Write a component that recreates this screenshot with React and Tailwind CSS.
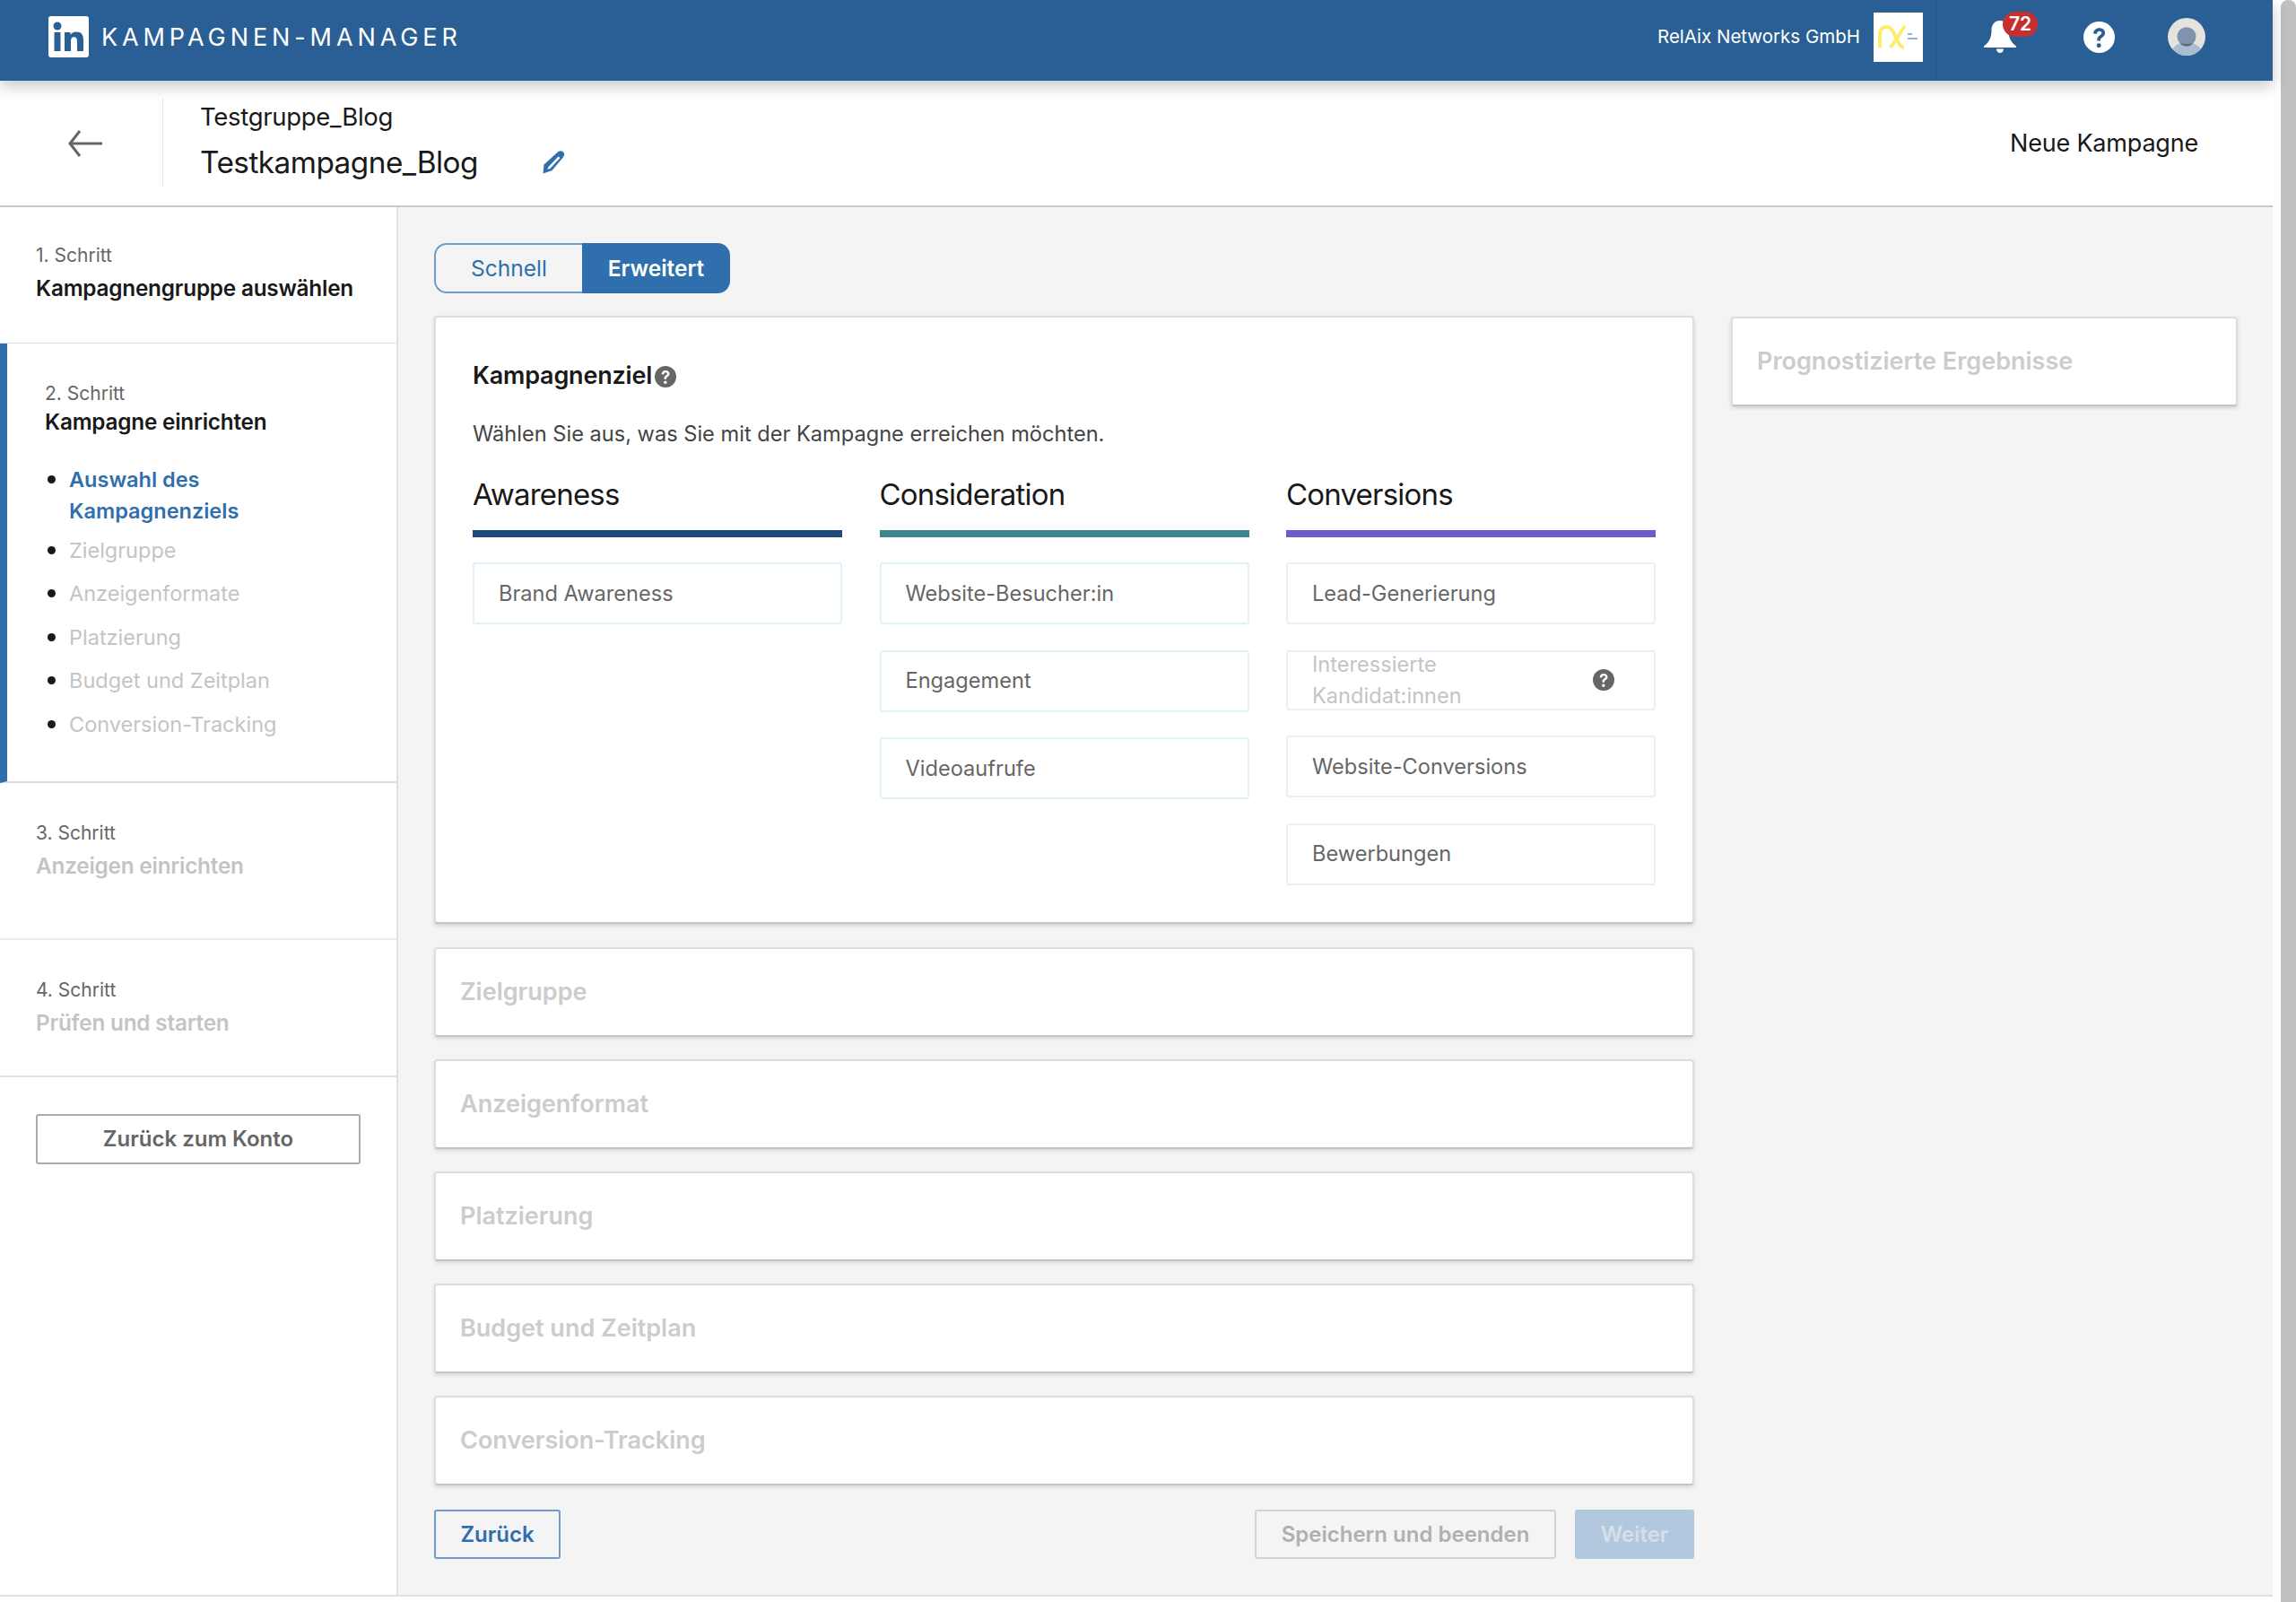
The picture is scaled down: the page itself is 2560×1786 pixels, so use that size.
const font = { fontFamily: "Inter, 'Noto Sans', sans-serif" };

function HelpIcon({ size = 24, fill = "#666666", mark = "#ffffff" }) {
  return (
    <svg width={size} height={size} viewBox="0 0 24 24" className="shrink-0">
      <circle cx="12" cy="12" r="12" fill={fill} />
      <path
        d="M7.600 9.200c.2-2.600 2-4.200 4.500-4.200 2.600 0 4.400 1.500 4.400 3.700 0 1.700-.9 2.600-2.100 3.400-1 .7-1.400 1.100-1.400 2.100v.5h-2.500v-.8c0-1.600.7-2.500 1.900-3.300 1-.7 1.500-1.100 1.500-1.800 0-.9-.7-1.500-1.700-1.500-1.100 0-1.900.8-2 2.100z"
        fill={mark}
      />
      <circle cx="11.800" cy="18.300" r="1.700" fill={mark} />
    </svg>
  );
}

function StepHead({ n, title, muted }) {
  return (
    <>
      <p className="text-[21px] leading-[28px] text-[#666666]">{n}. Schritt</p>
      <p
        className={`mt-[6px] text-[24.300px] leading-[32px] font-semibold tracking-[-0.2px] ${
          muted ? "text-[#c4c4c4]" : "text-[#191919]"
        }`}
      >
        {title}
      </p>
    </>
  );
}

function SubItem({ children, active }) {
  return (
    <li className={`flex ${active ? "-mb-[5px]" : ""}`}>
      <span className="mt-[13px] ml-[3px] mr-[15px] w-[9px] h-[9px] rounded-full bg-[#191919] shrink-0" />
      <span
        className={`text-[23.500px] leading-[35px] ${
          active ? "font-semibold text-[#2f6fad]" : "text-[#c4c4c4]"
        }`}
      >
        {children}
      </span>
    </li>
  );
}

function Sidebar() {
  return (
    <aside className="w-[444px] shrink-0 bg-white border-r-2 border-[#e0e0e0] flex flex-col">
      <div className="h-[152px] pl-[40px] pt-[40px] border-b border-[#e0e0e0]">
        <StepHead n={1} title="Kampagnengruppe auswählen" />
      </div>
      <div className="h-[490px] border-l-[8px] border-[#2f6fad] pl-[42px] pt-[42px] border-b-2 border-b-[#dedede]">
        <p className="text-[21px] leading-[28px] text-[#666666]">2. Schritt</p>
        <p className="mt-[1px] text-[24.300px] leading-[32px] font-semibold tracking-[-0.2px] text-[#191919]">
          Kampagne einrichten
        </p>
        <ul className="mt-[31px] flex flex-col gap-[13.500px] w-[300px]">
          <SubItem active>Auswahl des Kampagnenziels</SubItem>
          <SubItem>Zielgruppe</SubItem>
          <SubItem>Anzeigenformate</SubItem>
          <SubItem>Platzierung</SubItem>
          <SubItem>Budget und Zeitplan</SubItem>
          <SubItem>Conversion-Tracking</SubItem>
        </ul>
      </div>
      <div className="h-[175px] pl-[40px] pt-[42px] border-b-2 border-[#ebebeb]">
        <StepHead n={3} title="Anzeigen einrichten" muted />
      </div>
      <div className="h-[153px] pl-[40px] pt-[42px] border-b-2 border-[#e0e0e0]">
        <StepHead n={4} title="Prüfen und starten" muted />
      </div>
      <div className="px-[40px] pt-[41px]">
        <button className="w-[362px] h-[56px] border-2 border-[#aaaaaa] rounded-[3px] text-[24px] font-semibold text-[#666666] bg-white">
          Zurück zum Konto
        </button>
      </div>
    </aside>
  );
}

function Goal({ label, border, disabled }) {
  if (disabled) {
    return (
      <div
        className={`h-[67px] border-2 ${border} rounded-[3px] pl-[27px] pr-[44px] flex items-center justify-between text-[23.600px] leading-[35px] text-[#c4c4c4]`}
      >
        <span className="w-[240px]">{label}</span>
        <HelpIcon />
      </div>
    );
  }
  return (
    <div
      className={`h-[69px] border-2 ${border} rounded-[3px] pl-[27px] flex items-center text-[23.600px] text-[#666666]`}
    >
      {label}
    </div>
  );
}

function GoalColumn({ title, bar, children, gap }) {
  return (
    <div className="flex-1">
      <h3 className="text-[33px] leading-[44px] tracking-[-0.8px] text-[#191919]">{title}</h3>
      <div className={`mt-[18px] h-[8px] ${bar}`} />
      <div className={`mt-[28px] flex flex-col ${gap}`}>{children}</div>
    </div>
  );
}

function Collapsed({ title }) {
  return (
    <div className="h-[100px] bg-white border-2 border-[#dddddd] border-b-[#c4c4c4] rounded-[4px] shadow-[0_2px_4px_rgba(0,0,0,0.12)] pl-[27px] flex items-center text-[27px] font-semibold text-[#cccccc]">
      {title}
    </div>
  );
}

function ObjectiveCard() {
  return (
    <section className="h-[678px] bg-white border-2 border-[#dddddd] border-b-[#c4c4c4] rounded-[4px] shadow-[0_2px_4px_rgba(0,0,0,0.14)] pl-[41px] pr-[41px] pt-[47px]">
      <h2 className="flex items-center text-[27px] leading-[36px] font-semibold tracking-[-0.2px] text-[#191919]">
        Kampagnenziel
        <span className="ml-[3px] mt-[2px]">
          <HelpIcon />
        </span>
      </h2>
      <p className="mt-[31px] text-[23.600px] leading-[32px] text-[#444444]">
        Wählen Sie aus, was Sie mit der Kampagne erreichen möchten.
      </p>
      <div className="mt-[29px] flex gap-[41.500px]">
        <GoalColumn title="Awareness" bar="bg-[#1f4a7c]" gap="gap-[28px]">
          <Goal label="Brand Awareness" border="border-[#e2f2fb]" />
        </GoalColumn>
        <GoalColumn title="Consideration" bar="bg-[#3d8590]" gap="gap-[28.500px]">
          <Goal label="Website-Besucher:in" border="border-[#dff4f4]" />
          <Goal label="Engagement" border="border-[#dff4f4]" />
          <Goal label="Videoaufrufe" border="border-[#dff4f4]" />
        </GoalColumn>
        <GoalColumn title="Conversions" bar="bg-[#6a5cc9]" gap="gap-[28.500px]">
          <Goal label="Lead-Generierung" border="border-[#eeedfd]" />
          <Goal label="Interessierte Kandidat:innen" border="border-[#eeedfd]" disabled />
          <Goal label="Website-Conversions" border="border-[#eeedfd]" />
          <Goal label="Bewerbungen" border="border-[#eeedfd]" />
        </GoalColumn>
      </div>
    </section>
  );
}

function Main() {
  return (
    <main className="flex-1 bg-[#f4f4f4] pl-[40px] pt-[40px] pr-[39px] flex gap-[41px]">
      <div className="w-[1405px] shrink-0">
        <div className="flex h-[56px] w-[330px] text-[24.500px]">
          <button className="w-[165px] pt-[1px] border-2 border-r-0 border-[#6f9ccb] rounded-l-[14px] text-[#2f6fad]">
            Schnell
          </button>
          <button className="flex-1 pt-[1px] bg-[#2f6fad] rounded-r-[14px] font-semibold text-white">
            Erweitert
          </button>
        </div>
        <div className="mt-[25px] flex flex-col gap-[25px]">
          <div className="mb-[1px]">
            <ObjectiveCard />
          </div>
          <Collapsed title="Zielgruppe" />
          <Collapsed title="Anzeigenformat" />
          <Collapsed title="Platzierung" />
          <Collapsed title="Budget und Zeitplan" />
          <Collapsed title="Conversion-Tracking" />
        </div>
        <div className="mt-[27px] flex text-[24px] font-semibold">
          <button className="w-[141px] h-[55px] border-2 border-[#6f9ccb] rounded-[3px] text-[#2f6fad]">
            Zurück
          </button>
          <button className="ml-auto w-[336px] h-[55px] border-2 border-[#d2d2d2] rounded-[3px] text-[#b0b0b0]">
            Speichern und beenden
          </button>
          <button className="ml-[21px] w-[133px] h-[55px] bg-[#b2c8de] rounded-[3px] text-[#d5e0ec]">
            Weiter
          </button>
        </div>
      </div>
      <div className="flex-1">
        <div className="mt-[82px] h-[100px] bg-white border-2 border-[#dddddd] border-b-[#c4c4c4] rounded-[4px] shadow-[0_2px_4px_rgba(0,0,0,0.14)] pl-[27px] flex items-center text-[27px] font-semibold text-[#cccccc]">
          Prognostizierte Ergebnisse
        </div>
      </div>
    </main>
  );
}

function TopBar() {
  return (
    <header className="relative z-10 h-[90px] shrink-0 bg-[#2a5f96] shadow-[0_6px_16px_rgba(0,0,0,0.22)] flex items-center pl-[54px] pb-[8px] text-white">
      <svg width="45" height="46" viewBox="0 0 45 46" className="shrink-0">
        <rect width="45" height="46" rx="3" fill="#ffffff" />
        <circle cx="10" cy="11" r="4.500" fill="#2a5f96" />
        <rect x="6.500" y="18" width="7" height="21" fill="#2a5f96" />
        <path
          d="M18 18h6.500v3c1.200-2.100 3.500-3.500 6.500-3.500 5.500 0 8 3.200 8 9V39h-7V28c0-2.800-1-4.700-3.500-4.700s-3.500 2-3.500 4.700v11h-7z"
          fill="#2a5f96"
        />
      </svg>
      <span className="ml-[14px] text-[27px] tracking-[4.900px] leading-none">KAMPAGNEN-MANAGER</span>
      <span className="ml-auto text-[20.500px]">RelAix Networks GmbH</span>
      <div className="ml-[15px] w-[55px] h-[55px] bg-white flex items-center justify-center">
        <svg width="46" height="30" viewBox="0 0 46 30">
          <path d="M2 27V12C2 6 6 4 10 4c4 0 6 3 8 8l4 8c2 4 4 7 7 7" fill="none" stroke="#fdee6a" strokeWidth="4" />
          <path d="M30 3 14 27" fill="none" stroke="#fdee6a" strokeWidth="4" />
          <path d="M33 12h5M33 17h11" stroke="#8fb2d8" strokeWidth="2" />
        </svg>
      </div>
      <div className="ml-[15px] self-stretch -mb-[8px] w-px bg-[#255788]" />
      <div className="relative ml-[52px] w-[36px] h-[36px]">
        <svg width="36" height="36" viewBox="0 0 36 36">
          <path
            d="M18 0c-6 0-9.500 4.500-9.500 11 0 8-2.500 13-8.500 17.500V30h36v-1.500C30 24 27.500 19 27.500 11 27.500 4.500 24 0 18 0z"
            fill="#ffffff"
          />
          <path d="M14 31.500h8c0 2.500-1.700 4.500-4 4.500s-4-2-4-4.500z" fill="#ffffff" />
        </svg>
        <span className="absolute left-[21px] top-[-10px] w-[39px] h-[28px] rounded-full bg-[#c62f2f] text-[21px] leading-[28px] font-semibold text-center">
          72
        </span>
      </div>
      <div className="ml-[75px]">
        <HelpIcon size={35} fill="#ffffff" mark="#2a5f96" />
      </div>
      <svg width="42" height="42" viewBox="0 0 42 42" className="ml-[59px] mr-[75px]">
        <defs>
          <clipPath id="avatar-clip">
            <circle cx="21" cy="21" r="21" />
          </clipPath>
        </defs>
        <g clipPath="url(#avatar-clip)">
          <rect width="42" height="42" fill="#e6e3dc" />
          <ellipse cx="21" cy="44" rx="19" ry="17" fill="#a8bcd2" />
          <circle cx="21" cy="20.700" r="10.500" fill="#7f93ad" />
          <path d="M13.500 27.500c3 2 12 2 15 0-2 3.500-4.500 4-7.500 4s-5.500-.5-7.500-4z" fill="#5f6b7b" />
        </g>
      </svg>
    </header>
  );
}

function SubHeader() {
  return (
    <div className="h-[141px] shrink-0 bg-white border-b-2 border-[#c8c8c8] flex items-center">
      <div className="w-[181px] flex justify-center pl-[17px] pr-[9px]">
        <svg width="38" height="30" viewBox="0 0 38 30" fill="none" stroke="#666666" strokeWidth="3">
          <path d="M38 15H2" />
          <path d="M13 1 2 15l11 14" />
        </svg>
      </div>
      <div className="h-[99px] w-px bg-[#e4e4e4]" />
      <div className="ml-[41px] -mt-[5px]">
        <p className="text-[27.500px] leading-[36px] tracking-[-0.3px] text-[#191919]">Testgruppe_Blog</p>
        <div className="mt-[11px] flex items-center">
          <p className="text-[33.300px] leading-[44px] tracking-[-0.5px] text-[#191919]">Testkampagne_Blog</p>
          <svg width="26" height="26" viewBox="0 0 26 26" className="ml-[71px]">
            <path
              d="M18.500 1c2.500-1.500 6-.3 6.500 2.300.3 1.500-.3 3-1 4L11.500 22 1.500 25.500l1-10zM18.500 6.500 7.500 18l-1 3 3-1.200L20.500 8z"
              fill="#2f6fad"
              fillRule="evenodd"
            />
          </svg>
        </div>
      </div>
      <span className="ml-auto mr-[83px] mt-[2px] text-[27px] tracking-[-0.2px] text-[#191919]">Neue Kampagne</span>
    </div>
  );
}

export default function App() {
  return (
    <div className="w-[2560px] h-[1786px] flex overflow-hidden bg-white" style={font}>
      <div className="w-[2534px] shrink-0 flex flex-col">
        <TopBar />
        <SubHeader />
        <div className="flex flex-1 border-b-2 border-[#e0e0e0] mb-[6px]">
          <Sidebar />
          <Main />
        </div>
      </div>
      <div className="flex-1 pl-[9px]">
        <div className="w-full h-full rounded-t-[8px] bg-[#c0c0c0]" />
      </div>
    </div>
  );
}
